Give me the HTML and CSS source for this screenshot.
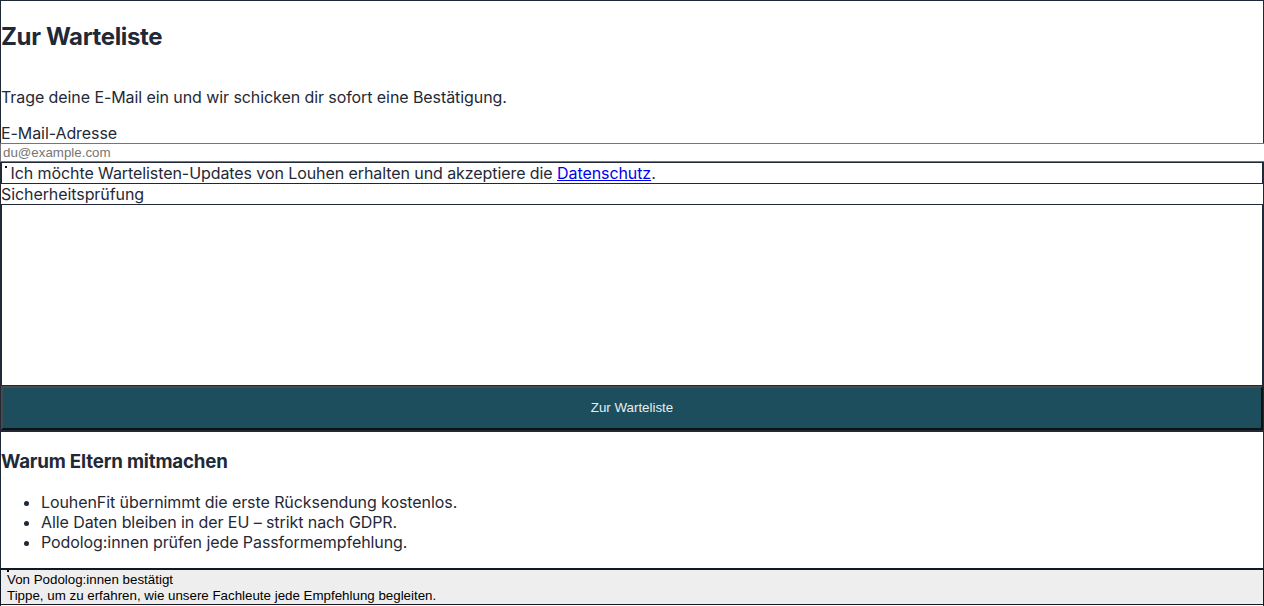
FILE: index.html
```html
<!DOCTYPE html>
<html lang="de">
<head>
<meta charset="utf-8">
<title>Zur Warteliste</title>
<link rel="stylesheet" href="styles.css">
</head>
<body>
<main class="page">
  <section class="waitlist">
    <h2 class="title">Zur Warteliste</h2>
    <p class="lead">Trage deine E-Mail ein und wir schicken dir sofort eine Bestätigung.</p>
    <form class="form">
      <label class="field-label" for="email">E-Mail-Adresse</label>
      <input class="email" id="email" type="email" placeholder="du@example.com">
      <label class="consent"><span class="tick"></span> Ich möchte Wartelisten-Updates von Louhen erhalten und akzeptiere die <a href="#">Datenschutz</a>.</label>
      <div class="field-label">Sicherheitsprüfung</div>
      <div class="captcha"></div>
      <button class="submit" type="button">Zur Warteliste</button>
    </form>
  </section>
  <section class="why">
    <h3 class="why-title">Warum Eltern mitmachen</h3>
    <ul class="why-list">
      <li>LouhenFit übernimmt die erste Rücksendung kostenlos.</li>
      <li>Alle Daten bleiben in der EU – strikt nach GDPR.</li>
      <li>Podolog:innen prüfen jede Passformempfehlung.</li>
    </ul>
  </section>
</main>
<aside class="trust">
  <span class="trust-dot"></span>
  <div class="trust-line">Von Podolog:innen bestätigt</div>
  <div class="trust-line">Tippe, um zu erfahren, wie unsere Fachleute jede Empfehlung begleiten.</div>
</aside>
</body>
</html>
```

FILE: styles.css
```css
html, body {
  margin: 0;
  padding: 0;
  background: #ffffff;
}

body {
  font-family: Inter, "Noto Sans", sans-serif;
  font-size: 16px;
  color: #1f2937;
  letter-spacing: -0.08px;
}

.page {
  border: 1px solid #1f2937;
  min-height: 620px;
}

.title {
  font-size: 24px;
  font-weight: 700;
  margin: 21px 0 36px;
  line-height: normal;
  letter-spacing: -0.36px;
}

.lead {
  margin: 0 0 16px;
}

.form {
  display: flex;
  flex-direction: column;
  border-bottom: 2px solid #1f2937;
}

.field-label {
  display: block;
  line-height: normal;
}

.email {
  font-family: "Liberation Sans", Arial, sans-serif;
  font-size: 13.33px;
  letter-spacing: 0;
  border: 1px solid #767676;
  padding: 1px 2px;
  margin: 0 0 0 -1px;
  width: calc(100% + 12px);
  box-sizing: border-box;
  height: 19px;
  background: #fff;
  border-radius: 0;
  outline: none;
}

.email::placeholder {
  color: #757575;
}

.consent {
  display: block;
  border: 1px solid #1f2937;
  line-height: 20px;
  padding-left: 0;
}

.tick {
  display: inline-block;
  width: 2px;
  height: 2px;
  background: #111;
  vertical-align: top;
  margin-top: 3px;
  margin-left: 3px;
  margin-right: -1px;
}

.consent a {
  color: #0000ee;
}

.captcha {
  border: 1px solid #1f2937;
  height: 180px;
}

.submit {
  font-family: "Liberation Sans", Arial, sans-serif;
  font-size: 13.33px;
  letter-spacing: 0;
  color: #e6eef0;
  background: #1c4e5d;
  border-style: solid;
  border-width: 2px;
  border-color: #4a4a4a #111 #111 #4a4a4a;
  height: 44px;
  padding: 0 0 2px;
  width: 100%;
}

.why-title {
  font-size: 18.72px;
  font-weight: 700;
  margin: 18px 0 19px;
  line-height: normal;
  letter-spacing: -0.18px;
}

.why-list {
  margin: 0;
  padding-left: 40px;
  line-height: 20px;
}

.trust {
  position: fixed;
  left: 0;
  right: 0;
  bottom: 1px;
  background: #eeeeee;
  border: 1px solid #111827;
  border-top-width: 2px;
  font-family: "Liberation Sans", Arial, sans-serif;
  font-size: 13.33px;
  letter-spacing: 0;
  color: #000;
  padding: 0 6px 1px;
}

.trust-dot {
  display: block;
  width: 2px;
  height: 2px;
  background: #000;
  margin: 0;
}

.trust-line {
  line-height: 15.5px;
}
```
